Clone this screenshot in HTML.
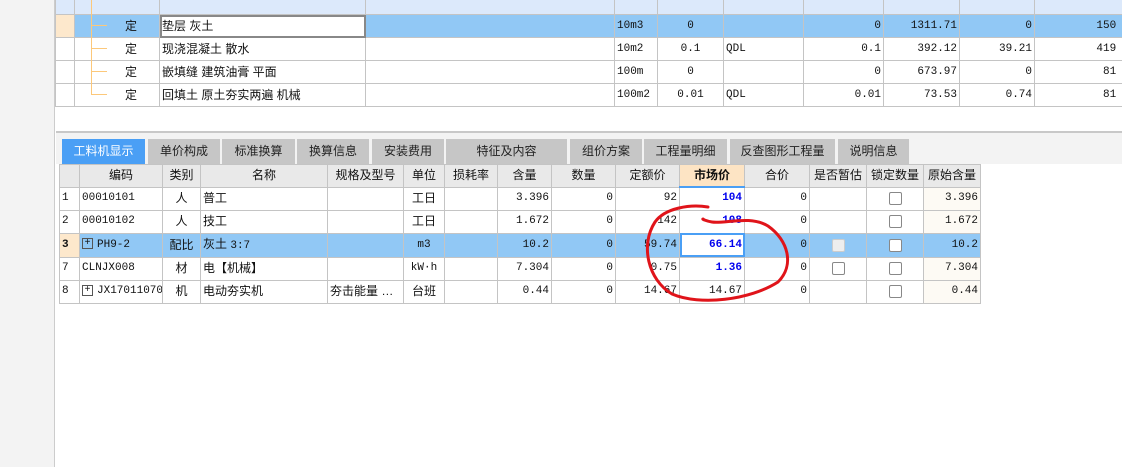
<!DOCTYPE html>
<html><head><meta charset="utf-8"><style>
*{margin:0;padding:0;box-sizing:border-box}
body{width:1122px;height:467px;background:#fff;position:relative;overflow:hidden;font-family:"Liberation Sans","Noto Sans CJK SC",sans-serif;font-size:12px;color:#111}
.gut{position:absolute;left:0;top:0;width:55px;height:467px;background:#f3f3f3;border-right:1px solid #ccc}
table{border-collapse:collapse;table-layout:fixed;position:absolute}
td{border:1px solid #c4c4c4;height:23px;padding:0 2px;white-space:nowrap;overflow:hidden;line-height:21px}
.m{font-family:"Liberation Mono","Noto Sans CJK SC",monospace;font-size:11px}
.r{text-align:right}.c{text-align:center}
.top{left:55px;top:-9px;width:1079px}
.top tr.h td{background:#dce9fb}
.top tr.s td{background:#91c8f5}
.top tr.s td.rn{background:#fde8cc}
.bar{position:absolute;left:56px;top:131px;width:1066px;height:33px;background:#f3f3f3;border-top:2px solid #c8c8c8}
.tab{position:absolute;top:139px;height:25px;background:#c6c6c6;text-align:center;line-height:25px;font-size:12px;color:#222}
.tab.a{background:#4a9ff5;color:#fff}
.bot{left:59px;top:164px;width:921px}
.bot tr.h td{background:#e9e9e9;text-align:center;height:22px}
.bot tr.s td{background:#91c8f5}
.bot td.o{background:#fdfaf4}
.bot tr.s td.o{background:#91c8f5}
.mp{color:#0000ee;font-weight:bold}
.cb{display:inline-block;width:13px;height:13px;border:1px solid #888;border-radius:2px;background:#fff;vertical-align:middle}
.pl{display:inline-block;width:11px;height:11px;border:1px solid #555;font-size:10px;line-height:9px;text-align:center;margin-right:4px;vertical-align:middle}
.tl{position:absolute;background:#fcc87a;z-index:5}
</style></head><body>
<div class="gut"></div>
<table class="top">
<colgroup><col style="width:19px"><col style="width:85px"><col style="width:206px"><col style="width:249px"><col style="width:43px"><col style="width:66px"><col style="width:80px"><col style="width:80px"><col style="width:76px"><col style="width:75px"><col style="width:100px"></colgroup>
<tr class="h"><td></td><td></td><td></td><td></td><td></td><td></td><td></td><td></td><td></td><td></td><td></td></tr>
<tr class="s"><td class="rn"></td><td class="c" style="padding-left:30px">定</td><td style="background:#fff;outline:2px solid #888;outline-offset:-2px">垫层 灰土</td><td></td><td class="m">10m3</td><td class="m c">0</td><td></td><td class="m r">0</td><td class="m r">1311.71</td><td class="m r">0</td><td class="m">&nbsp;&nbsp;&nbsp;&nbsp;&nbsp;&nbsp;&nbsp;&nbsp;&nbsp;150</td></tr>
<tr><td></td><td class="c" style="padding-left:30px">定</td><td>现浇混凝土 散水</td><td></td><td class="m">10m2</td><td class="m c">0.1</td><td class="m">QDL</td><td class="m r">0.1</td><td class="m r">392.12</td><td class="m r">39.21</td><td class="m">&nbsp;&nbsp;&nbsp;&nbsp;&nbsp;&nbsp;&nbsp;&nbsp;&nbsp;419</td></tr>
<tr><td></td><td class="c" style="padding-left:30px">定</td><td>嵌填缝 建筑油膏 平面</td><td></td><td class="m">100m</td><td class="m c">0</td><td></td><td class="m r">0</td><td class="m r">673.97</td><td class="m r">0</td><td class="m">&nbsp;&nbsp;&nbsp;&nbsp;&nbsp;&nbsp;&nbsp;&nbsp;&nbsp;&nbsp;81</td></tr>
<tr><td></td><td class="c" style="padding-left:30px">定</td><td>回填土 原土夯实两遍 机械</td><td></td><td class="m">100m2</td><td class="m c">0.01</td><td class="m">QDL</td><td class="m r">0.01</td><td class="m r">73.53</td><td class="m r">0.74</td><td class="m">&nbsp;&nbsp;&nbsp;&nbsp;&nbsp;&nbsp;&nbsp;&nbsp;&nbsp;&nbsp;81</td></tr>
</table>
<div class="tl" style="left:91px;top:0;width:1px;height:95px"></div>
<div class="tl" style="left:92px;top:25px;width:15px;height:1px"></div>
<div class="tl" style="left:92px;top:48px;width:15px;height:1px"></div>
<div class="tl" style="left:92px;top:71px;width:15px;height:1px"></div>
<div class="tl" style="left:92px;top:94px;width:15px;height:1px"></div>
<div class="bar"></div>
<div class="tab a" style="left:62px;width:83px">工料机显示</div>
<div class="tab" style="left:148px;width:72px">单价构成</div>
<div class="tab" style="left:222px;width:73px">标准换算</div>
<div class="tab" style="left:297px;width:72px">换算信息</div>
<div class="tab" style="left:372px;width:72px">安装费用</div>
<div class="tab" style="left:446px;width:121px">特征及内容</div>
<div class="tab" style="left:570px;width:72px">组价方案</div>
<div class="tab" style="left:644px;width:83px">工程量明细</div>
<div class="tab" style="left:730px;width:105px">反查图形工程量</div>
<div class="tab" style="left:838px;width:71px">说明信息</div>
<table class="bot">
<colgroup><col style="width:20px"><col style="width:83px"><col style="width:38px"><col style="width:127px"><col style="width:76px"><col style="width:41px"><col style="width:53px"><col style="width:54px"><col style="width:64px"><col style="width:64px"><col style="width:65px"><col style="width:65px"><col style="width:57px"><col style="width:57px"><col style="width:57px"></colgroup>
<tr class="h"><td></td><td>编码</td><td>类别</td><td>名称</td><td>规格及型号</td><td>单位</td><td>损耗率</td><td>含量</td><td>数量</td><td>定额价</td><td style="background:#fde4c4;font-weight:bold;border-bottom:2px solid #4a9ff5">市场价</td><td>合价</td><td>是否暂估</td><td>锁定数量</td><td>原始含量</td></tr>
<tr><td class="m">1</td><td class="m">00010101</td><td class="c">人</td><td>普工</td><td></td><td class="c">工日</td><td></td><td class="m r">3.396</td><td class="m r">0</td><td class="m r">92</td><td class="m r mp">104</td><td class="m r">0</td><td></td><td class="c"><span class="cb"></span></td><td class="m r o">3.396</td></tr>
<tr><td class="m">2</td><td class="m">00010102</td><td class="c">人</td><td>技工</td><td></td><td class="c">工日</td><td></td><td class="m r">1.672</td><td class="m r">0</td><td class="m r">142</td><td class="m r mp">108</td><td class="m r">0</td><td></td><td class="c"><span class="cb"></span></td><td class="m r o">1.672</td></tr>
<tr class="s"><td class="m" style="background:#fde8cc;font-weight:bold">3</td><td class="m"><span class="pl">+</span>PH9-2</td><td class="c">配比</td><td>灰土 <span class="m">3:7</span></td><td></td><td class="m c">m3</td><td></td><td class="m r">10.2</td><td class="m r">0</td><td class="m r">59.74</td><td class="m r mp" style="background:#fff;outline:2px solid #4a9ff5;outline-offset:-2px">66.14</td><td class="m r">0</td><td class="c"><span class="cb" style="background:#eee;border-color:#ccc"></span></td><td class="c"><span class="cb"></span></td><td class="m r o">10.2</td></tr>
<tr><td class="m">7</td><td class="m">CLNJX008</td><td class="c">材</td><td>电【机械】</td><td></td><td class="m c">kW·h</td><td></td><td class="m r">7.304</td><td class="m r">0</td><td class="m r">0.75</td><td class="m r mp">1.36</td><td class="m r">0</td><td class="c"><span class="cb"></span></td><td class="c"><span class="cb"></span></td><td class="m r o">7.304</td></tr>
<tr><td class="m">8</td><td class="m"><span class="pl">+</span>JX17011070</td><td class="c">机</td><td>电动夯实机</td><td>夯击能量 …</td><td class="c">台班</td><td></td><td class="m r">0.44</td><td class="m r">0</td><td class="m r">14.67</td><td class="m r">14.67</td><td class="m r">0</td><td></td><td class="c"><span class="cb"></span></td><td class="m r o">0.44</td></tr>
</table>
<svg style="position:absolute;left:0;top:0;z-index:6" width="1122" height="467"><path d="M708,207 C690,204 665,208 655,222 C640,245 648,280 672,294 C700,306 750,300 778,282 C795,265 788,240 768,226 C750,215 725,224 712,222 C706,221 702,219 703,219" fill="none" stroke="#e0141a" stroke-width="3" stroke-linecap="round"/></svg>
</body></html>
